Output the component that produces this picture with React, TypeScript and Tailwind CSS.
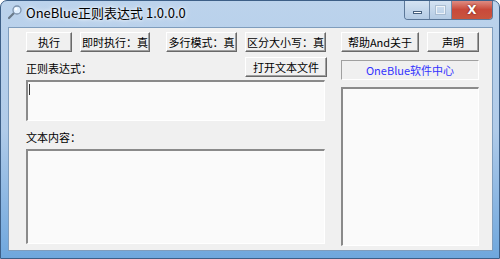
import React from "react";

const font = { fontFamily: '"Noto Sans CJK SC", "Noto Sans", sans-serif' };

function Btn({ children, className = "" }: { children: React.ReactNode; className?: string }) {
  return (
    <div
      className={
        "flex items-center justify-center h-[20px] whitespace-nowrap overflow-hidden bg-[#f0f0f0] border-t border-l border-t-white border-l-white border-r border-b border-r-[#696969] border-b-[#696969] shadow-[inset_-1px_-1px_0_#a0a0a0] text-[11px] leading-none text-black " +
        className
      }
    >
      {children}
    </div>
  );
}

function Sunken({ className = "", children }: { className?: string; children?: React.ReactNode }) {
  return (
    <div
      className={
        "bg-[#fafafa] border-t-2 border-l-2 border-t-[#8a8a8a] border-l-[#8a8a8a] border-r border-b border-r-white border-b-white " +
        className
      }
    >
      {children}
    </div>
  );
}

export default function App() {
  return (
    <div className="w-[500px] h-[259px] bg-white" style={font}>
      <div className="w-[500px] h-[259px] rounded-t-[7px] border border-[#3d5f87] bg-gradient-to-b from-[#bcd3ec] via-[#b0cbe9] to-[#6fa7dd] flex flex-col overflow-hidden">
        {/* title bar */}
        <div className="h-[26px] flex items-start relative">
          <div className="flex items-center h-[22px] pl-[6px]">
            <svg width="16" height="16" viewBox="0 0 16 16">
              <line x1="2" y1="14" x2="7" y2="9" stroke="#6a7a8a" strokeWidth="2.2" strokeLinecap="round" />
              <circle cx="10" cy="6" r="4" fill="#dfefff" stroke="#7d93ad" strokeWidth="1.3" />
              <circle cx="9" cy="5" r="1.4" fill="#ffffff" />
            </svg>
            <span className="ml-[3px] text-[13px] text-black leading-none whitespace-nowrap [text-shadow:0_0_6px_#ffffff,0_0_3px_#ffffff]">
              OneBlue正则表达式 1.0.0.0
            </span>
          </div>
          <div className="ml-auto mr-[6px] flex h-[20px] -mt-px rounded-b-[4px] overflow-hidden border border-t-0 border-[#5b7798]">
            <div className="w-[25px] h-full bg-gradient-to-b from-[#d6e4f3] to-[#b4cbe4] border-r border-[#6f89a8] flex items-center justify-center">
              <div className="w-[9px] h-[3px] bg-white border border-[#46607e] mt-[5px]" />
            </div>
            <div className="w-[22px] h-full bg-gradient-to-b from-[#d6e4f3] to-[#b4cbe4] border-r border-[#6f89a8] flex items-center justify-center">
              <div className="w-[9px] h-[8px] border border-white outline outline-1 outline-[#9fb3c8] opacity-70" />
            </div>
            <div className="w-[40px] h-full bg-gradient-to-b from-[#e0928a] via-[#c9493a] to-[#c8553e] flex items-center justify-center">
              <span className="text-white text-[12px] font-bold leading-none [text-shadow:0_0_2px_#5a1008]" style={{ fontFamily: '"DejaVu Sans", sans-serif' }}>
                X
              </span>
            </div>
          </div>
        </div>
        {/* client */}
        <div className="ml-[7px] mr-[6px] h-[224px] border border-[#7f9dbd] bg-[#f0f0f0] pl-[17px] pt-[4px] flex gap-[15px]">
          <div className="w-[300px] flex flex-col">
            <div className="flex h-[20px]">
              <Btn className="w-[46px]">执行</Btn>
              <Btn className="w-[70px] ml-[8px]">即时执行：真</Btn>
              <Btn className="w-[71px] ml-[16px]">多行模式：真</Btn>
              <Btn className="w-[81px] ml-[8px]">区分大小写：真</Btn>
            </div>
            <div className="flex items-end justify-between mt-[5px] h-[20px]">
              <span className="text-[11px] leading-none text-black mb-[3px] whitespace-nowrap">正则表达式：</span>
              <Btn className="w-[82px] mr-[-1px]">打开文本文件</Btn>
            </div>
            <Sunken className="mt-[3px] h-[41px] w-[299px] relative">
              <div className="absolute left-[1px] top-[2px] w-px h-[11px] bg-[#333]" />
            </Sunken>
            <span className="text-[11px] leading-none text-black mt-[11px] whitespace-nowrap">文本内容：</span>
            <Sunken className="mt-[6px] h-[95px] w-[299px]" />
          </div>
          <div className="w-[138px] flex flex-col">
            <div className="flex h-[20px] gap-[8px]">
              <Btn className="w-[78px]">帮助And关于</Btn>
              <Btn className="w-[52px]">声明</Btn>
            </div>
            <div className="mt-[8px] h-[20px] border-t border-l border-[#a0a0a0] border-r border-b border-r-white border-b-white flex items-center justify-center text-[11px] leading-none text-[#3333ff] whitespace-nowrap">
              OneBlue软件中心
            </div>
            <Sunken className="mt-[7px] h-[159px]" />
          </div>
        </div>
      </div>
    </div>
  );
}
